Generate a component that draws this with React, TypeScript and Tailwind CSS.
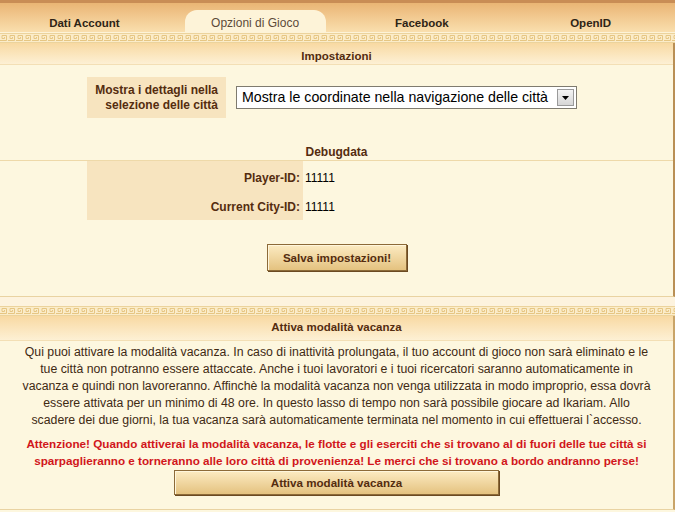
import React from 'react';

const tabs = [
  { label: 'Dati Account', active: false },
  { label: 'Opzioni di Gioco', active: true },
  { label: 'Facebook', active: false },
  { label: 'OpenID', active: false },
];

// righe come nell'originale
const vacationLines = [
  'Qui puoi attivare la modalità vacanza. In caso di inattività prolungata, il tuo account di gioco non sarà eliminato e le',
  'tue città non potranno essere attaccate. Anche i tuoi lavoratori e i tuoi ricercatori saranno automaticamente in',
  'vacanza e quindi non lavoreranno. Affinchè la modalità vacanza non venga utilizzata in modo improprio, essa dovrà',
  'essere attivata per un minimo di 48 ore. In questo lasso di tempo non sarà possibile giocare ad Ikariam. Allo',
  'scadere dei due giorni, la tua vacanza sarà automaticamente terminata nel momento in cui effettuerai l`accesso.',
];

const warningLines = [
  'Attenzione! Quando attiverai la modalità vacanza, le flotte e gli eserciti che si trovano al di fuori delle tue città si',
  'sparpaglieranno e torneranno alle loro città di provenienza! Le merci che si trovano a bordo andranno perse!',
];

function GreekBand() {
  return (
    <div className="h-[10px] bg-[#fbecc9] border-y border-[#ecd39c]">
      <svg width="100%" height="8" className="block">
        <defs>
          <pattern id="meander" width="8" height="8" patternUnits="userSpaceOnUse">
            <path
              d="M0 6.5 H6.5 V1.5 H2 V4.5 H4.5 V3"
              fill="none"
              stroke="#e6c683"
              strokeWidth="1"
            />
          </pattern>
        </defs>
        <rect width="100%" height="8" fill="url(#meander)" />
      </svg>
    </div>
  );
}

function SectionHeader({ title, className }: { title: string; className: string }) {
  return (
    <div
      className={`flex items-center justify-center bg-gradient-to-b from-[#f8d9a2] to-[#fdf0d4] border-b border-[#f3dfb5] text-[11.5px] font-bold text-[#542c0f] ${className}`}
    >
      {title}
    </div>
  );
}

function GameButton({ label, className }: { label: string; className: string }) {
  return (
    <button
      type="button"
      className={`flex items-center justify-center bg-gradient-to-b from-[#fcebc2] to-[#e4c27f] border border-[#8c6a38] shadow-[inset_1px_1px_0_#fff6dc,1px_1px_0_#6b4a22] text-[11.6px] font-bold text-[#542c0f] ${className}`}
    >
      {label}
    </button>
  );
}

function FakeSelect() {
  return (
    <div className="flex items-center w-[341px] h-[23px] bg-white border border-[#7f7b6f]">
      <span className="flex-1 pl-[5px] text-[14.2px] text-black whitespace-nowrap">
        Mostra le coordinate nella navigazione delle città
      </span>
      <span className="mr-[2px] flex h-[17px] w-[17px] items-center justify-center border border-[#9a9a9a] bg-gradient-to-b from-[#f4f4f4] to-[#d6d6d6]">
        <svg width="7" height="4" viewBox="0 0 7 4">
          <path d="M0 0 H7 L3.5 4 Z" fill="#000" />
        </svg>
      </span>
    </div>
  );
}

export default function App() {
  return (
    <div className="w-[675px] h-[512px] overflow-hidden bg-[#fdf7df] font-['Liberation_Sans',Arial,sans-serif]">
      {/* tabs */}
      <div className="h-[32px] border-t-[3px] border-[#c98d55] bg-gradient-to-b from-[#eab574] to-[#f9dfae] grid grid-cols-4">
        {tabs.map((tab) => (
          tab.active ? (
            <div key={tab.label} className="flex items-end pl-[16px] pr-[12px]">
              <div className="flex h-[22px] w-full items-center justify-center rounded-t-[12px] bg-[#fdf3d8] pt-[3px] text-[12px] text-[#5c4a38]">
                {tab.label}
              </div>
            </div>
          ) : (
            <div key={tab.label} className="flex items-center justify-center pt-[12px] text-[11.5px] font-bold text-[#2e2416]">
              {tab.label}
            </div>
          )
        ))}
      </div>
      <div className="h-px bg-[#fdf3d8]" />
      <GreekBand />

      {/* Impostazioni */}
      <div className="border-r-2 border-b border-[#b98f55] border-b-[#e9d3a2]">
        <SectionHeader title="Impostazioni" className="h-[22px] pt-[6px]" />
        <div className="flex items-center pt-[12px] pl-[87px]">
          <div className="flex h-[41px] w-[139px] flex-col items-end justify-center bg-[#f7e4bf] pr-[8px] text-right text-[12px] font-bold leading-[15px] text-[#542c0f]">
            <span>Mostra i dettagli nella</span>
            <span>selezione delle città</span>
          </div>
          <div className="ml-[10px]">
            <FakeSelect />
          </div>
        </div>
        <div className="mt-[27px] h-[16px] leading-[15px] border-b border-[#eed9a9] text-center text-[12px] font-bold text-[#542c0f]">
          Debugdata
        </div>
        <div className="flex pl-[87px]">
          <div className="flex w-[216px] flex-col bg-[#f7e4bf] pr-[3px] text-right text-[12px] font-bold text-[#542c0f]">
            <div className="pt-[8px] h-[29px]">Player-ID:</div>
            <div className="pt-[8px] h-[30px]">Current City-ID:</div>
          </div>
          <div className="flex flex-col pl-[2px] text-[12px] text-black">
            <div className="pt-[8px] h-[29px]">11111</div>
            <div className="pt-[8px] h-[30px]">11111</div>
          </div>
        </div>
        <div className="flex justify-center pt-[24px] pb-[25px] pl-[1px]">
          <GameButton label="Salva impostazioni!" className="h-[27px] w-[140px]" />
        </div>
      </div>

      <div className="h-[9px] bg-[#fdf3de]" />
      <GreekBand />

      {/* Attiva modalità vacanza */}
      <div className="border-r-2 border-b border-[#c9a468] border-b-[#e9d3a2]">
        <SectionHeader title="Attiva modalità vacanza" className="h-[25px]" />
        <div className="flex flex-col items-center pt-[3px] text-[12.3px] leading-[17px] text-[#3f2a14] whitespace-nowrap">
          {vacationLines.map((line) => (
            <span key={line}>{line}</span>
          ))}
        </div>
        <div className="flex flex-col items-center pt-[6px] text-[11.7px] font-bold leading-[17px] text-[#d1161b] whitespace-nowrap">
          {warningLines.map((line) => (
            <span key={line}>{line}</span>
          ))}
        </div>
        <div className="flex justify-center pt-[1px] pb-[14px]">
          <GameButton label="Attiva modalità vacanza" className="h-[25px] w-[325px]" />
        </div>
      </div>
    </div>
  );
}
